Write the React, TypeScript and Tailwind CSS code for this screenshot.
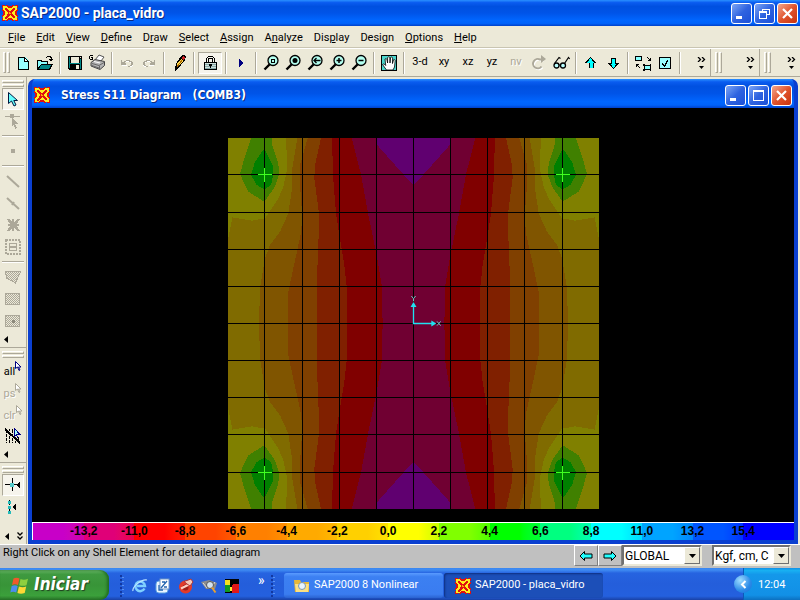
import type { ReactNode } from 'react';
import clsx from 'clsx';

const menus = [
  { label: 'File', hot: 0 },
  { label: 'Edit', hot: 0 },
  { label: 'View', hot: 0 },
  { label: 'Define', hot: 0 },
  { label: 'Draw', hot: 1 },
  { label: 'Select', hot: 0 },
  { label: 'Assign', hot: 0 },
  { label: 'Analyze', hot: 1 },
  { label: 'Display', hot: 3 },
  { label: 'Design', hot: 4 },
  { label: 'Options', hot: 0 },
  { label: 'Help', hot: 0 },
];

const legendColors = [
  '#c800c8', '#e00078', '#ff0000', '#ff4400', '#ff8000', '#ffaa00', '#ffd000', '#ffff00',
  '#80ff00', '#00ff00', '#00ff80', '#00ffff', '#00a4ff', '#0055ff', '#0000ff',
];
const legendValues = ['-13,2', '-11,0', '-8,8', '-6,6', '-4,4', '-2,2', '0,0', '2,2', '4,4', '6,6', '8,8', '11,0', '13,2', '15,4'];

const Svg = ({ children, size = 16, smooth = false }: { children: ReactNode; size?: number; smooth?: boolean }) => (
  <svg width={size} height={size} viewBox={`0 0 ${size} ${size}`} fill="none" shapeRendering={smooth ? 'auto' : 'crispEdges'} aria-hidden="true" className="shrink-0">
    {children}
  </svg>
);

/* ---------- Icons ---------- */

const AppIcon = () => (
  <Svg>
    <path d="M1 1h14v14H1z" fill="#ffee20" />
    <path d="M0 0h3v1H1v2H0zM4 0h2v1h4V0h2v1h-1v1h-1v1H6V2H5V1H4zM13 0h3v3h-1V1h-2zM0 4h1v1h1v1h1v4H2v1H1v1H0v-2h1V6H0zM15 4h1v2h-1v4h1v2h-1v-1h-1v-1h-1V6h1V5h1zM0 13h1v2h2v1H0zM15 13h1v3h-3v-1h2zM4 16v-1h1v-1h1v-1h4v1h1v1h1v1h-2v-1H6v1z" fill="#e01010" />
    <path d="M3 3h2v1h1v1h1v1h2V5h1V4h1V3h2v2h-1v1h-1v1h-1v2h1v1h1v1h1v2h-2v-1h-1v-1H9v-1H8v1H7v1H6v1H5v1H3v-2h1v-1h1V9h1V7H5V6H4V5H3z" fill="#e01010" />
    <path d="M7 7h1v1h1v1H7z" fill="#ffb000" />
  </Svg>
);

const NewIcon = () => (
  <Svg>
    <path d="M3 2h7l4 4v9H3z" fill="#9ff" />
    <path d="M3 2h7v1H4v11h9V6h1v9H3z" fill="#000" />
    <path d="M9 2h1v1h1v1h1v1h1v1h1v1H9z" fill="#000" />
    <path d="M10 4h1v1h1v1h-2z" fill="#fff" />
  </Svg>
);

const OpenIcon = () => (
  <Svg>
    <path d="M0 5h4l1 1h6v3h5l-3 6H0z" fill="#000" />
    <path d="M1 6h3v1h6v2H4L1 13z" fill="#8ff" />
    <path d="M4 10h10l-2 4H2z" fill="#088" />
    <path d="M9 2h1V1h4v1h1v3h-1V3h-1V2h-3v1H9zM12 4h4v1h-1v1h-2V5h-1z" fill="#000" />
  </Svg>
);

const SaveIcon = () => (
  <Svg>
    <path d="M1 1h14v14H2l-1-1z" fill="#000" />
    <path d="M2 2h1v11H2zM13 4h1v10h-1zM3 8h10v1H3z" fill="#088" />
    <path d="M4 2h8v6H4z" fill="#ece9d8" />
    <path d="M9 10h3v4H9z" fill="#ece9d8" />
    <path d="M13 2h1v1h-1z" fill="#ece9d8" />
  </Svg>
);

const PrintIcon = () => (
  <Svg size={17} smooth>
    <path d="M6 6l4-5 5 2-3 4z" fill="#fff" stroke="#555" />
    <path d="M2 8.500l4-3 9.500 2v4L11 15.500 2 12z" fill="#b4b4b4" stroke="#444" />
    <path d="M3 9.500l7 2 5-3M3 11.500l7 2.500M10.500 12v3" stroke="#666" />
    <path d="M5 7.500l6 1.500" stroke="#fff" />
    <path d="M1 1h3v1H1zM0 2h1v3H0zM1 5h3v1H1zM3 3h1v2H3zM2 3h1v1H2z" fill="#000" />
  </Svg>
);

const UndoIcon = ({ flip = false }: { flip?: boolean }) => (
  <Svg>
    <g transform={flip ? 'translate(16 0) scale(-1 1)' : undefined}>
      <path d="M3 10h5v1H3zM7 6h4v1H7zM11 7h2v1h-2zM13 8h1v3h-1zM11 11h2v1h-2zM4 9h3v1H4zM5 8h1v1H5z" fill="#fff" />
      <path d="M2 5h1v2h2V6h2V5h4v1h2v1h1v3h-1v1h-2v1H9v-1h2v-1h1V7h-2V6H7v1H6v1h1v2H2z" fill="#aca899" />
    </g>
  </Svg>
);

const PencilIcon = () => (
  <Svg>
    <path d="M11 0h2l2 2-1 3-7 9-3 2V12l2-5z" fill="#000" />
    <path d="M6 9l4-5 2 2-5 6z" fill="#ffd84a" />
    <path d="M10 3l2-2 2 2-1 2z" fill="#c22" />
    <path d="M6 12l5-7" stroke="#a60" />
  </Svg>
);

const LockIcon = () => (
  <Svg>
    <path d="M6 1h5v1H6zM5 2h1v1H5zM11 2h1v1h-1zM4 3h1v4H4zM12 3h1v4h-1zM6 3h5v1H6zM6 4h1v3H6zM10 4h1v3h-1z" fill="#000" />
    <path d="M2 7h13v8H2z" fill="#000" />
    <path d="M3 8h11v6H3z" fill="#cfe0dc" />
    <path d="M3 9h11v1H3zM3 11h11v1H3zM3 13h11v1H3z" fill="#8aa" />
    <path d="M7 9h3v2H9v2H8v-2H7z" fill="#000" />
  </Svg>
);

const PlayIcon = () => (
  <Svg><path d="M6 4h1v1h1v1h1v1h1v2H9v1H8v1H7v1H6z" fill="#000080" /></Svg>
);

const ZoomIcon = ({ children }: { children: ReactNode }) => (
  <Svg size={17} smooth>
    <path d="M7 10L1.500 15.500" stroke="#000" strokeWidth="2.400" />
    <circle cx="10" cy="6.500" r="5" fill="#b4fff0" stroke="#000" strokeWidth="1.300" />
    {children}
  </Svg>
);

const HandIcon = () => (
  <Svg smooth>
    <path d="M0 0h16v16H0z" fill="#000" />
    <path d="M1 1h14v14H1z" fill="#4cd6cc" />
    <path d="M5.500 15L1.500 9.500c.8-1 2-.6 3.200 1L4 4c1.300-.8 1.800 0 2 .8L6.600 8V2.500c.8-1 2-.8 2.200.2L9 8l.6-5.500c.8-.8 2-.4 2 .6L11.500 8.500l1-3.700c1-.6 1.700 0 1.700 1L13.500 12 12 15z" fill="#fff" stroke="#000" strokeWidth=".8" />
  </Svg>
);

const RotateIcon = () => (
  <Svg smooth>
    <path d="M10.500 11.500A4.700 4.700 0 1 1 9 4.500h3" stroke="#fff" strokeWidth="2" transform="translate(1 1)" />
    <path d="M10.500 11.500A4.700 4.700 0 1 1 9 4.500h3" stroke="#aca899" strokeWidth="2" />
    <path d="M10 0l5 4-5 4z" fill="#aca899" />
  </Svg>
);

const GlassesIcon = () => (
  <Svg size={17} smooth>
    <circle cx="3.500" cy="11.500" r="2.500" fill="#bff" stroke="#000" strokeWidth="1.300" />
    <circle cx="10" cy="11.500" r="2.500" fill="#bff" stroke="#000" strokeWidth="1.300" />
    <path d="M1.500 9.500l4.500-6 1.500 1M11.500 9.500l4-6 1.200 1.500M6 11h1.500" stroke="#000" strokeWidth="1.200" />
  </Svg>
);

const FatArrow = ({ turn }: { turn?: string }) => (
  <Svg>
    <g transform={turn}>
      <path d="M7.500 2L13 8h-2.500v5h-5V8H2z" fill="#000" />
      <path d="M7.500 4L10 7H9v5H7V7H5z" fill="#0ff" stroke="#0ff" />
    </g>
  </Svg>
);

const ShrinkIcon = () => (
  <Svg>
    <path d="M0 1h7v5H0zM9 10h7v5H9z" fill="#000" />
    <path d="M1 2h5v3H1zM10 11h5v3h-5z" fill="#8ff" />
    <path d="M12 2h1v1h1v1h1V3h1v3h-3V5h1V4h-1V3h-1zM1 9h3v1H3v1h1v1h1v1H4v-1H3v-1H2v1H1z" fill="#000" />
    <path d="M8 9h2v2H8zM15 9h1v2h-1zM8 14h2v2H8zM15 14h1v2h-1z" fill="#000" />
  </Svg>
);

const CheckIcon = () => (
  <Svg>
    <path d="M2 2h12v12H2z" fill="#000" />
    <path d="M3 3h10v10H3z" fill="#9ff" />
    <path d="M5 8h1v1h1v1h1V8h1V6h1V5h1v2h-1v2H9v2H8v1H7v-1H6v-1H5z" fill="#000" />
  </Svg>
);

const PointerIcon = () => (
  <Svg smooth>
    <path d="M3.500 1.500v11l3-2.500 2.500 5 2-1-2.200-4.500h3.700z" fill="#6ff" stroke="#001840" />
  </Svg>
);

const ReshapeIcon = () => (
  <Svg>
    <path d="M0 3h15v1H0zM5 1h4v4H5z" fill="#aca899" />
    <path d="M7 4l6 7h-3l2 4-1.500 1-2-4L7 13z" fill="#aca899" />
  </Svg>
);

const CrossLines = () => (
  <Svg>
    <path d="M2 2h3l2 3V2h2v3l3-3h3l-3 5h2v2h-2l3 5h-3l-3-3v3H7v-3l-2 3H2l3-5H3V7h2z" fill="#aca899" />
  </Svg>
);

const GridBox = () => (
  <Svg>
    <path d="M1 1h14v14H1z" stroke="#aca899" strokeWidth="2" strokeDasharray="2 1" />
    <path d="M4 4h8v1H4zM4 7h8v2H4zM4 11h8v1H4zM4 4h1v8H4zM11 4h1v8h-1z" fill="#aca899" />
  </Svg>
);

/* hatched area used by the shell drawing tools */
const Hatched = ({ d, dot = false }: { d: string; dot?: boolean }) => (
  <Svg>
    <defs>
      <pattern id="hatch" width="2" height="2" patternUnits="userSpaceOnUse">
        <path d="M0 0h1v1H0zM1 1h1v1H1z" fill="#aca899" />
      </pattern>
    </defs>
    <path d={d} fill="url(#hatch)" stroke="#aca899" />
    {dot && <path d="M7 7h3v3H7z" fill="#8d8a7c" />}
  </Svg>
);

const TinyPointer = ({ color }: { color: string }) => (
  <svg width="7" height="11" viewBox="0 0 7 11" fill="none" className="mb-2 shrink-0" aria-hidden="true">
    <path d="M.5.5v7l2-1.500 1.500 3.500 1-.5-1.500-3H6z" fill="#fff" stroke={color} />
  </svg>
);

const IntersectIcon = () => (
  <Svg>
    <path d="M1 2v13M4 4v11M7 6v9M10 9v6M13 11v4" stroke="#000" strokeDasharray="3 1" />
    <path d="M4 1v2M7 1v4M13 9v6" stroke="#000" />
    <path d="M0 1l15 14" stroke="#000" strokeWidth="2" />
    <path d="M9.500.5v8l2-1.500 1.500 3M9.500.5l5 5.500H12" fill="#9ff" stroke="#000080" />
  </Svg>
);

const SnapIcon = () => (
  <Svg>
    <path d="M0 7h13v1H0zM7 1h1v13H7z" fill="#000" />
    <path d="M5 6h4v4H5z" fill="#5cc" />
    <path d="M11 8l4-4v8z" fill="#000" />
  </Svg>
);

const SnapLineIcon = () => (
  <Svg>
    <path d="M4.500 1v14" stroke="#000" strokeDasharray="2 1" />
    <path d="M3 2h3v3H3zM3 7h3v3H3zM3 12h3v3H3z" fill="#2bb" />
    <path d="M7 8l4-4v8z" fill="#000" />
  </Svg>
);

const SmallLeft = () => (
  <svg width="4" height="7" viewBox="0 0 4 7" aria-hidden="true"><path d="M4 0v7L0 3.500z" fill="#000" /></svg>
);

const WindowsFlag = () => (
  <svg width="20" height="19" viewBox="0 0 20 19" aria-hidden="true">
    <path d="M3.500 2.500Q6.500.8 9.500 2.500L8 9Q5 7.500 2 9z" fill="#f0592b" />
    <path d="M10.500 3Q14 4.500 18 2.800L16.500 9.200Q13 10.500 9.200 9.200z" fill="#8ccf3f" />
    <path d="M1.700 10Q5 8.500 7.700 10L6.200 16.500Q3 15 .3 16.500z" fill="#4c8df0" />
    <path d="M8.900 10.500Q13 12 16.200 10.500L14.700 17Q11 18.500 7.400 17z" fill="#fdd835" />
  </svg>
);

/* ---------- Window chrome ---------- */

const CaptionButton = ({ label, close = false, children }: { label: string; close?: boolean; children: ReactNode }) => (
  <button
    aria-label={label}
    className={clsx(
      'flex h-[21px] w-[21px] items-center justify-center rounded-[3px] border border-white bg-linear-to-br',
      close ? 'from-[#f0a58c] via-[#e0532b] to-[#c8320c]' : 'from-[#7ea5f4] via-[#2f63e0] to-[#1c50d8]',
    )}
  >
    <svg width="15" height="15" viewBox="0 0 15 15" fill="none" stroke="#fff" shapeRendering={close ? 'auto' : 'crispEdges'}>{children}</svg>
  </button>
);

const CloseGlyph = <path d="M3 3l9 9M12 3l-9 9" strokeWidth="2.200" />;
const MinGlyph = <path d="M2 11.500h6" strokeWidth="3" />;

const titleBlue =
  'bg-[linear-gradient(180deg,#2a90ff_0%,#0a5cf0_10%,#0050e0_25%,#0054e8_50%,#0066ff_78%,#0062fa_90%,#0040c8_100%)]';

const Separator = () => <div className="ml-[3px] mr-1 h-[22px] w-px shrink-0 bg-[#aca899] shadow-[1px_0_0_#fff]" />;
const SideSeparator = () => <div className="mx-[2px] mt-[3px] mb-1 h-px shrink-0 self-stretch bg-[#aca899] shadow-[0_1px_0_#fff]" />;

const Tool = ({ label, wide = false, pressed = false, disabled = false, children }: {
  label: string; wide?: boolean; pressed?: boolean; disabled?: boolean; children: ReactNode;
}) => (
  <button
    aria-label={label}
    disabled={disabled}
    className={clsx(
      'flex h-[22px] shrink-0 items-center justify-center',
      wide ? 'w-6' : 'w-[22px]',
      pressed && 'border border-t-[#aca899] border-l-[#aca899] border-r-white border-b-white bg-[#f6f4ec]',
      disabled && 'text-[#aca899] [text-shadow:1px_1px_0_#fff]',
    )}
  >
    {children}
  </button>
);

const More = () => (
  <button aria-label="More buttons" className="flex w-[18px] shrink-0 flex-col items-center gap-1">
    <svg width="9" height="5" viewBox="0 0 9 5" fill="none" stroke="#000" strokeWidth="1.300"><path d="M1 0l2.500 2.500L1 5M5 0l2.500 2.500L5 5" /></svg>
    <svg width="5" height="3" viewBox="0 0 5 3"><path d="M0 0h5L2.500 3z" /></svg>
  </button>
);

const Grip = () => (
  <div className="flex shrink-0 gap-px">
    <div className="h-[21px] w-[3px] border border-t-white border-l-white border-r-[#aca899] border-b-[#aca899]" />
    <div className="h-[21px] w-[3px] border border-t-white border-l-white border-r-[#aca899] border-b-[#aca899]" />
  </div>
);

const SideGrip = () => (
  <div className="flex h-[10px] shrink-0 flex-col justify-center gap-px self-stretch px-[2px]">
    <div className="h-[3px] border border-t-white border-l-white border-r-[#aca899] border-b-[#aca899]" />
    <div className="h-[3px] border border-t-white border-l-white border-r-[#aca899] border-b-[#aca899]" />
  </div>
);

const SideEnd = () => (
  <div className="mb-px flex h-4 items-center self-stretch border-b border-[#aca899] pl-1"><SmallLeft /></div>
);

const TitleBar = () => (
  <header className={clsx('flex h-[26px] items-center justify-between px-[2px]', titleBlue)}>
    <div className="flex items-center gap-[3px]">
      <AppIcon />
      <h1 className="text-[14px] font-bold text-white [text-shadow:1px_1px_0_#0a2a80]">SAP2000 - placa_vidro</h1>
    </div>
    <div className="flex gap-[2px]">
      <CaptionButton label="Minimize">{MinGlyph}</CaptionButton>
      <CaptionButton label="Restore">
        <path d="M5 3h8M12.500 3v6M5.500 3v2M10 8.500h3" />
        <path d="M2 6h8" strokeWidth="2" />
        <path d="M2.500 6v6.500h7V6" />
      </CaptionButton>
      <CaptionButton label="Close" close>{CloseGlyph}</CaptionButton>
    </div>
  </header>
);

const MenuBar = () => (
  <nav className="flex h-[22px] items-end border-b border-[#c9c5b2] pl-[2px]">
    {menus.map(m => (
      <button key={m.label} className="pr-[5px] pl-[6px] leading-[18px]">
        {m.label.slice(0, m.hot)}
        <span className="underline underline-offset-1">{m.label[m.hot]}</span>
        {m.label.slice(m.hot + 1)}
      </button>
    ))}
  </nav>
);

const Toolbar = () => (
  <div className="flex h-[29px] items-center border-t border-b border-t-white border-b-[#aca899]">
    <div className="flex flex-1 items-center overflow-hidden pl-[3px]">
      <Grip />
      <div className="w-[2px] shrink-0" />
      <Tool label="New"><NewIcon /></Tool>
      <Tool label="Open"><OpenIcon /></Tool>
      <Separator />
      <Tool label="Save"><SaveIcon /></Tool>
      <Tool label="Print"><PrintIcon /></Tool>
      <Separator />
      <Tool label="Undo" disabled><UndoIcon /></Tool>
      <Tool label="Redo" disabled><UndoIcon flip /></Tool>
      <Separator />
      <Tool label="Refresh"><PencilIcon /></Tool>
      <Separator />
      <Tool label="Lock model" wide pressed><LockIcon /></Tool>
      <Separator />
      <Tool label="Run analysis"><PlayIcon /></Tool>
      <Separator />
      <Tool label="Rubber band zoom"><ZoomIcon><path d="M8.500 5.500h3v3h-3z" stroke="#000" shapeRendering="crispEdges" /></ZoomIcon></Tool>
      <Tool label="Full view"><ZoomIcon><circle cx="10" cy="6.500" r="2.500" fill="#000" /></ZoomIcon></Tool>
      <Tool label="Previous zoom"><ZoomIcon><path d="M7 6.500h6.500M9.500 4L7 6.500 9.500 9" stroke="#000" strokeWidth="1.300" /></ZoomIcon></Tool>
      <Tool label="Zoom in"><ZoomIcon><path d="M7.500 6.500h5M10 4v5" stroke="#000" strokeWidth="1.500" /></ZoomIcon></Tool>
      <Tool label="Zoom out"><ZoomIcon><path d="M7.500 6.500h5" stroke="#000" strokeWidth="1.500" /></ZoomIcon></Tool>
      <Separator />
      <Tool label="Pan"><HandIcon /></Tool>
      <Separator />
      <Tool label="3-d view" wide>3-d</Tool>
      <Tool label="xy view" wide>xy</Tool>
      <Tool label="xz view" wide>xz</Tool>
      <Tool label="yz view" wide>yz</Tool>
      <Tool label="nv view" wide disabled>nv</Tool>
      <Tool label="Rotate view" disabled><RotateIcon /></Tool>
      <Tool label="Perspective"><GlassesIcon /></Tool>
      <Separator />
      <Tool label="Move up in list"><FatArrow /></Tool>
      <Tool label="Move down in list"><FatArrow turn="rotate(180 8 8)" /></Tool>
      <Separator />
      <Tool label="Shrink objects"><ShrinkIcon /></Tool>
      <Tool label="Display options"><CheckIcon /></Tool>
      <Separator />
    </div>
    <More />
    {[0, 1].map(i => (
      <div key={i} className={clsx('flex h-full items-center justify-between border-l border-[#aca899] pl-1', i === 0 ? 'w-[49px]' : 'w-[41px]')}>
        <Grip />
        <More />
      </div>
    ))}
  </div>
);

const SideBar = () => (
  <aside className="flex w-[27px] shrink-0 flex-col items-center border-r border-[#aca899] pt-px">
    <SideGrip />
    <Tool label="Select pointer" pressed><PointerIcon /></Tool>
    <Tool label="Reshape" disabled><ReshapeIcon /></Tool>
    <SideSeparator />
    <Tool label="Draw point" disabled><Svg><path d="M6 6h4v4H6z" fill="#aca899" /></Svg></Tool>
    <SideSeparator />
    <Tool label="Draw frame" disabled><Svg smooth><path d="M2 3l12 11" stroke="#aca899" strokeWidth="2" /></Svg></Tool>
    <Tool label="Quick frame" disabled><Svg smooth><path d="M2 3l12 11M9 7l-2 3" stroke="#aca899" strokeWidth="2" /></Svg></Tool>
    <Tool label="Quick braces" disabled><CrossLines /></Tool>
    <Tool label="Secondary beams" disabled><GridBox /></Tool>
    <SideSeparator />
    <Tool label="Draw poly area" disabled><Hatched d="M.5 2.500h15l-5 11.500-9-5z" /></Tool>
    <Tool label="Draw rectangular area" disabled><Hatched d="M.5 2.500h14v11H.5z" /></Tool>
    <Tool label="Quick area" disabled><Hatched d="M.5 2.500h14v11H.5z" dot /></Tool>
    <SideEnd />
    <SideGrip />
    <Tool label="Select all"><span className="pt-1">all</span><TinyPointer color="#000080" /></Tool>
    <Tool label="Previous selection" disabled><span className="pt-1">ps</span><TinyPointer color="#aca899" /></Tool>
    <Tool label="Clear selection" disabled><span className="pt-1">clr</span><TinyPointer color="#aca899" /></Tool>
    <Tool label="Intersecting line"><IntersectIcon /></Tool>
    <SideEnd />
    <SideGrip />
    <Tool label="Snap to points" pressed><SnapIcon /></Tool>
    <Tool label="Snap to midpoints"><SnapLineIcon /></Tool>
    <div className="flex flex-1 items-end gap-2 self-stretch pb-1 pl-[5px]">
      <SmallLeft />
      <svg width="6" height="8" viewBox="0 0 6 8" fill="none" stroke="#000" strokeWidth="1.300"><path d="M.5.5L3 3 5.500.5M.5 4.500L3 7l2.500-2.500" /></svg>
    </div>
  </aside>
);

/* ---------- Stress contours ---------- */

// One quarter of the plate; the other three are mirrored copies.
const Quarter = () => (
  <g id="quarter">
    <path d="M9 9H566V566H9z" fill="#700032" />
    <path d="M9 9H380L408 118 430 240 455 360 470 450 473 566H9z" fill="#800000" />
    <path d="M9 9H322L323 110 333 235 343 300 358 390 365 455 366 566H9z" fill="#802000" />
    <path d="M9 9H288L270 90 268 130 282 235 280 343 277 400 275 566H9z" fill="#804000" />
    <path d="M9 9H248L225 90V150L231 232 229 290 207 390 190 470V566H9z" fill="#805500" />
    <path d="M9 9H217L200 110 201 160 190 235 165 290 135 330 120 370 105 460 102 566H9z" fill="#806b00" />
    <path d="M9 9H183L187 100 175 155 160 190 120 250 80 257 22 247 9 315z" fill="#808000" />
    <path d="M78 9L55 80 45 118 70 170 118 200 150 155 162 120 160 85 142 30 140 9z" fill="#408000" />
    <path d="M118 40L90 80 78 120 95 150 118 163 138 150 145 118 143 90z" fill="#008000" />
    <path d="M455 9H566V152L550 135 455 28z" fill="#600070" />
  </g>
);

const gridLines = [118.5, 232.5, 343.5, 454.5, 565.5, 676.5, 787.5, 898.5, 1012.5];
const supports = [[118.5, 118.5], [1012.5, 118.5], [118.5, 1012.5], [1012.5, 1012.5]];

const StressPlate = () => (
  <svg width="371" height="371" viewBox="9 9 1113 1113" fill="none" role="img" aria-label="S11 stress contours" className="shrink-0">
    <g shapeRendering="crispEdges">
      <Quarter />
      <use href="#quarter" transform="translate(1131 0) scale(-1 1)" />
      <use href="#quarter" transform="translate(0 1131) scale(1 -1)" />
      <use href="#quarter" transform="translate(1131 1131) scale(-1 -1)" />
      {gridLines.map(p => <path key={p} d={`M${p} 9V1122M9 ${p}H1122`} stroke="#000" strokeWidth="3" />)}
      {supports.map(([x, y]) => <path key={`${x}-${y}`} d={`M${x - 20} ${y}h42M${x} ${y - 20}v42`} stroke="#40ff20" strokeWidth="3" />)}
    </g>
    <path d="M563.500 506h4v57.500h60v4h-64z" fill="#20e0f0" />
    <path d="M565.500 501l9 15h-18zM634 565.500l-15-9v18z" fill="#20e0f0" />
    <path d="M559 483l6.500 8 6.500-8M565.500 491v8M636 559l11 13M647 559l-11 13" stroke="#6cc0c0" strokeWidth="3" />
  </svg>
);

const Legend = () => (
  <div className="grid h-[18px] shrink-0 grid-cols-[repeat(15,minmax(0,1fr))] border-t border-l border-white">
    {legendColors.map((c, i) => (
      <div key={c} className="relative" style={{ background: `linear-gradient(90deg, ${c} 60%, color-mix(in srgb, ${c} 60%, ${legendColors[i + 1] ?? c}))` }}>
        {i > 0 && (
          <span className="absolute top-0 left-0 z-10 -translate-x-1/2 font-['Liberation_Sans',sans-serif] text-[12px] leading-4 font-bold text-black">{legendValues[i - 1]}</span>
        )}
      </div>
    ))}
  </div>
);

const DiagramWindow = () => (
  <section className="mt-[2px] mr-[2px] ml-px flex flex-1 flex-col overflow-hidden rounded-t-[7px] border-x-4 border-b-4 border-[#0a3fd0] bg-[#0a3fd0]">
    <div className={clsx('-mx-1 flex h-[29px] shrink-0 items-center justify-between pt-[3px] pr-[6px] pl-[6px]', titleBlue)}>
      <div className="flex items-center gap-[11px]">
        <AppIcon />
        <h2 className="font-['DejaVu_Sans_Condensed','Open_Sans',sans-serif] text-[12px] font-bold whitespace-pre text-white [text-shadow:1px_1px_0_#0a2a80]">{'Stress S11 Diagram   (COMB3)'}</h2>
      </div>
      <div className="flex gap-[2px]">
        <CaptionButton label="Minimize diagram">{MinGlyph}</CaptionButton>
        <CaptionButton label="Maximize diagram"><path d="M2 3h11" strokeWidth="2" /><path d="M2.500 3v9.500h10V3" /></CaptionButton>
        <CaptionButton label="Close diagram" close>{CloseGlyph}</CaptionButton>
      </div>
    </div>
    <div className="flex flex-1 items-end justify-center bg-black pb-[13px]">
      <StressPlate />
    </div>
    <Legend />
  </section>
);

/* ---------- Bottom bars ---------- */

const Combo = ({ label, value, className }: { label: string; value: string; className: string }) => (
  <div className={clsx('grid h-[21px] items-center border-2 border-t-[#707070] border-l-[#707070] border-r-[#ece9d8] border-b-[#ece9d8] bg-white', className)}>
    <select aria-label={label} defaultValue={value} className="col-start-1 row-start-1 h-[17px] w-full appearance-none bg-transparent pl-px text-[12px] leading-4 outline-none">
      <option>{value}</option>
    </select>
    <span className="pointer-events-none col-start-1 row-start-1 flex h-[17px] w-4 items-center justify-center justify-self-end border border-t-white border-l-white border-r-[#707070] border-b-[#707070] bg-[#ece9d8]">
      <svg width="7" height="4" viewBox="0 0 7 4"><path d="M0 0h7L3.500 4z" /></svg>
    </span>
  </div>
);

const StatusBar = () => (
  <div className="flex h-6 shrink-0 items-start justify-between border-t border-white bg-[#c0c0c0] pr-[9px] pl-[3px]">
    <p className="leading-4">Right Click on any Shell Element for detailed diagram</p>
    <div className="flex">
      {['rotate(-90 8 8)', 'rotate(90 8 8)'].map((turn, i) => (
        <button key={turn} aria-label={i ? 'Next' : 'Previous'} className="flex h-[21px] w-6 items-center justify-center border border-t-white border-l-white border-r-[#808080] border-b-[#808080]">
          <Svg smooth><path d="M8 2l4.500 4.500H10V14H6V6.500H3.500z" fill="#2ff" stroke="#000" transform={turn} /></Svg>
        </button>
      ))}
      <Combo label="Coordinate system" value="GLOBAL" className="w-20" />
      <Combo label="Units" value="Kgf, cm, C" className="ml-[10px] w-[79px]" />
    </div>
  </div>
);

const DotGrip = () => (
  <svg width="5" height="22" viewBox="0 0 5 22" shapeRendering="crispEdges" className="shrink-0">
    {[0, 4, 8, 12, 16, 20].map(y => (
      <g key={y}><path d={`M0 ${y}h2v2H0z`} fill="#1238a0" /><path d={`M2 ${y + 2}h2v1H2z`} fill="#5b92f0" /></g>
    ))}
  </svg>
);

const QuickLaunch = () => (
  <div className="flex items-center gap-[7px]">
    <button aria-label="Internet Explorer">
      <Svg smooth>
        <path d="M12.500 10.500A4.800 4.800 0 1 1 13 8H5" stroke="#7fd0ff" strokeWidth="2.500" />
        <path d="M1 13C0 9 9 1 15 2" stroke="#bfe6ff" strokeWidth="1.200" />
      </Svg>
    </button>
    <button aria-label="Show desktop">
      <Svg smooth>
        <rect x="1" y="3" width="12" height="12" rx="3" fill="#e8f4ff" stroke="#5aa0e0" />
        <rect x="5" y="1" width="9" height="10" fill="#fff" stroke="#6a94c8" />
        <path d="M6 10l6-7M7 4h3M9 9h3M4 7v5h4" stroke="#2566b0" strokeWidth="1.300" />
      </Svg>
    </button>
    <button aria-label="Download manager">
      <Svg smooth>
        <circle cx="7.500" cy="9" r="6.500" fill="#e23b2a" />
        <circle cx="7.500" cy="9.500" r="3" fill="#9b1d18" />
        <path d="M3 10.500l8-4" stroke="#ffd0c0" strokeWidth="2" />
        <path d="M6 3.500L13 1l2 3-3 4-3-2z" fill="#f5c8b8" stroke="#a33" />
      </Svg>
    </button>
    <button aria-label="Search">
      <Svg smooth>
        <path d="M0 4l8-2 8 3-2 6H5z" fill="#8c8c8c" />
        <path d="M2 5l4 5M14 4l-4 6" stroke="#ddd" />
        <circle cx="9" cy="7" r="3.500" fill="#d5e4f0" stroke="#555" />
        <path d="M11 9.500l3.500 5" stroke="#e8a030" strokeWidth="2" />
      </Svg>
    </button>
    <button aria-label="Color viewer">
      <Svg>
        <path d="M1 1h14v14H1z" fill="#000" />
        <path d="M1 2h5v5H1z" fill="#f5e020" />
        <path d="M1 7h5v7H1z" fill="#109a20" />
        <path d="M9 6h6v9H8V9z" fill="#e01818" />
        <path d="M6 9h2v4H6z" fill="#fff030" />
      </Svg>
    </button>
  </div>
);

const Taskbar = () => (
  <footer className="flex h-8 shrink-0 items-stretch bg-[linear-gradient(180deg,#3a86f0_0%,#3f8cf3_6%,#2663e0_16%,#245edb_50%,#2460de_88%,#1941a5_100%)] text-white">
    <button className="mt-[2px] flex w-[109px] items-center gap-1 rounded-r-[9px] bg-[linear-gradient(180deg,#6cb86a_0%,#3f9a40_14%,#389438_50%,#3ba03b_85%,#2a762a_100%)] pl-[10px] shadow-[inset_-2px_0_3px_#1f6a20]">
      <WindowsFlag />
      <span className="font-['DejaVu_Sans_Condensed','Open_Sans',sans-serif] text-[17px] font-bold italic [text-shadow:1px_1px_1px_#204020]">Iniciar</span>
    </button>
    <div className="flex w-[167px] items-center pt-1 pl-[11px]">
      <DotGrip />
      <div className="ml-[7px]"><QuickLaunch /></div>
      <span className="mb-3 ml-[18px] flex-1 text-[14px] leading-3">»</span>
      <DotGrip />
    </div>
    <div className="flex flex-1 gap-px pt-[5px] pb-[2px] pl-2">
      <button className="flex w-[159px] items-center gap-1 rounded-[3px] bg-[linear-gradient(180deg,#5a9bff_0%,#3c80f2_15%,#3a7cf0_85%,#2a62d0_100%)] pl-[10px]">
        <svg width="16" height="14" viewBox="0 0 16 14" aria-hidden="true">
          <path d="M0 1h6l1 2h8v10H1z" fill="#e8b838" />
          <path d="M1 5h14l-1 8H2z" fill="#fbe083" />
          <circle cx="8" cy="7" r="3.500" fill="#e6f4ff" stroke="#7896b4" />
        </svg>
        SAP2000 8 Nonlinear
      </button>
      <button className="flex w-[159px] items-center gap-1 rounded-[3px] bg-[#1c4fb8] pl-[11px] shadow-[inset_1px_1px_2px_#0e2f80]">
        <AppIcon />
        SAP2000 - placa_vidro
      </button>
    </div>
    <div className="flex w-[66px] items-center">
      <button aria-label="Show hidden icons" className="z-10 -mr-[9px] flex h-[18px] w-[18px] shrink-0 items-center justify-center rounded-full bg-[radial-gradient(circle_at_35%_30%,#9fdcff,#2a8ae8_60%,#1870d8)]">
        <svg width="7" height="9" viewBox="0 0 7 9" fill="none" stroke="#fff" strokeWidth="2"><path d="M5.500 1L2 4.500 5.500 8" /></svg>
      </button>
      <div className="flex h-full flex-1 items-center border-l border-[#0c5ab8] bg-[linear-gradient(180deg,#1290e6_0%,#18b0f2_8%,#1498ea_20%,#1290e6_85%,#0c70c0_100%)] pt-[2px] pl-[14px]">12:04</div>
    </div>
  </footer>
);

export default function App() {
  return (
    <div className="flex min-h-screen flex-col bg-[#ece9d8] font-['Roboto','Noto_Sans',sans-serif] text-[11px] text-black">
      <TitleBar />
      <MenuBar />
      <Toolbar />
      <main className="flex flex-1">
        <SideBar />
        <DiagramWindow />
      </main>
      <StatusBar />
      <Taskbar />
    </div>
  );
}
